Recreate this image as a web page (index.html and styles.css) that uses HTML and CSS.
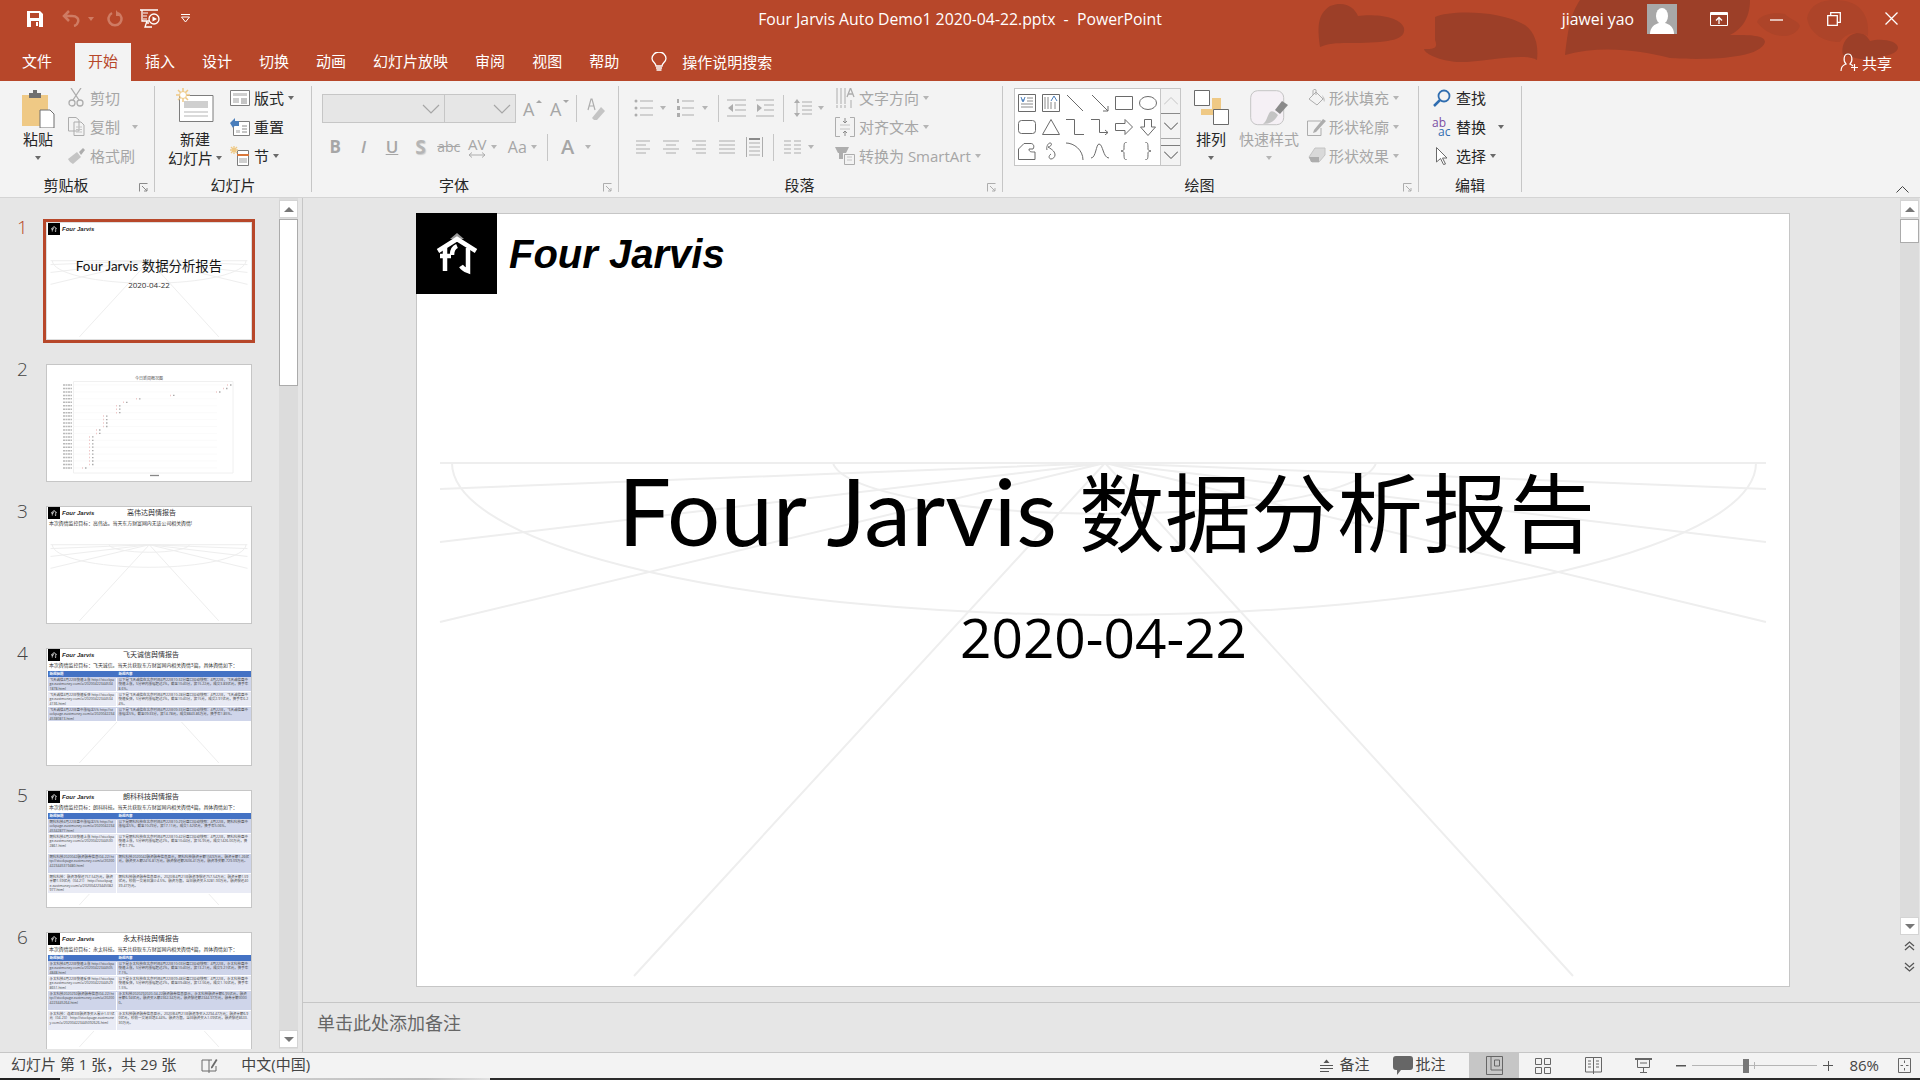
FILE: index.html
```html
<!DOCTYPE html>
<html lang="zh-CN">

<head>
    <meta charset="UTF-8">
    <title>Four Jarvis Auto Demo1 2020-04-22.pptx - PowerPoint</title>
    <link rel="stylesheet" href="styles.css">
</head>

<body>
    <svg class="defs" width="0" height="0">
        <symbol id="rays" viewBox="0 0 1374 773">
            <g class="ray-lines">
                <path d="M24 250H1350"/>
                <path d="M36 250A652 152 0 0 0 1340 250"/>
                <path d="M417 250A272 54 0 0 0 960 250"/>
                <path d="M689 250L24 276M689 250L1350 276M689 250L24 329M689 250L1350 329M689 250L24 409M689 250L1350 409M689 250L218 763M689 250L1157 763"/>
            </g>
        </symbol>
        <symbol id="logo" viewBox="0 0 81 81">
            <rect width="81" height="81" fill="#000"/>
            <path d="M41 20l7 6H34z" fill="#999"/>
            <g fill="none" stroke="#fff" stroke-width="4.5">
                <path d="M22 38L41 26L60 38"/>
                <path d="M29 35V58M24 43H35"/>
                <path d="M52 35V58Q47 56 45 53"/>
                <path d="M36 42Q36 35 41 33"/>
            </g>
        </symbol>
    </svg>

    <header class="head">
        <svg class="head-art" width="660" height="81" viewBox="0 0 660 81">
            <g fill="#9c3f28">
                <path d="M60 47C58 30 56 15 70 6C85 0 95 8 98 16C110 14 140 15 144 28C146 40 130 42 100 43C85 43 70 42 60 47Z"/>
                <path d="M175 17C190 10 240 10 265 25C278 35 278 50 277 60C265 52 225 62 200 62C185 62 165 55 164 49C175 49 178 48 175 40Z"/>
                <path d="M305 55C308 30 310 15 320 0H490C490 20 480 30 470 35C490 35 505 35 505 42C500 60 440 60 410 58C380 50 340 45 305 55Z"/>
                <path d="M583 55C580 42 590 32 600 33C606 34 608 38 610 41C620 38 638 40 638 48C636 56 620 56 610 60C600 60 590 56 583 55Z"/>
            </g>
            <path d="M547 18C550 5 560 0 575 0C600 0 610 15 608 36C595 30 585 34 580 42C565 42 550 35 547 18Z" fill="#ad4429"/>
            <path d="M497 22C500 14 515 12 525 14C530 20 538 20 540 26C535 40 510 40 497 22Z" fill="#ad4429"/>
        </svg>

        <div class="titlebar">
            <div class="qat">
                <svg class="q-save" width="16" height="16" viewBox="0 0 16 16"><path d="M0 0H13L16 3V16H0Z" fill="#fff"/><path d="M3 2H12V7H3Z" fill="#b7472a"/><path d="M4 10H12V16H4Z" fill="#b7472a"/><path d="M9 11H11V15H9Z" fill="#fff"/></svg>
                <svg class="q-undo" width="18" height="17" viewBox="0 0 18 17"><path d="M7 1L2 6L7 11M2 6H10C15 6 17 9 16 12C15.500 14 14 15.500 12 16" fill="none" stroke="#cf7b63" stroke-width="2.500"/></svg>
                <span class="q-caret"></span>
                <svg class="q-redo" width="16" height="17" viewBox="0 0 16 17"><path d="M5 3A6.500 6.500 0 1 0 11 3" fill="none" stroke="#cf7b63" stroke-width="2.500"/><path d="M9 0V6H14Z" fill="#cf7b63"/></svg>
                <svg class="q-show" width="20" height="19" viewBox="0 0 20 19"><path d="M0 1H18M2 1V12H9M7 12L5 18H12M7 14H9" fill="none" stroke="#fff" stroke-width="1.300"/><path d="M3 4H8M3 7H7M3 10H7" stroke="#fff"/><circle cx="14" cy="10" r="5" fill="none" stroke="#fff" stroke-width="1.300"/><path d="M12.500 7.500L17 10L12.500 12.500Z" fill="#fff"/></svg>
                <svg class="q-more" width="9" height="9" viewBox="0 0 9 9"><path d="M0 .5H9M.5 3L4.500 8L8.500 3Z" fill="none" stroke="#fff"/></svg>
            </div>
            <div class="doc-title">Four Jarvis Auto Demo1 2020-04-22.pptx &nbsp;-&nbsp; PowerPoint</div>
            <div class="win">
                <span class="user">jiawei yao</span>
                <svg class="avatar" width="30" height="30" viewBox="0 0 30 30"><rect width="30" height="30" fill="#a8a8a8"/><ellipse cx="15" cy="12" rx="6" ry="8" fill="#fff"/><path d="M3 30C3 23 8 20 12 19H18C22 20 27 23 27 30Z" fill="#fff"/></svg>
                <svg class="w-ribbon" width="18" height="14" viewBox="0 0 18 14"><path d="M.5.500H17.500V13.500H.5Z" fill="none" stroke="#fff"/><path d="M1 1H17V3H1Z" fill="#fff"/><path d="M9 12V6M6 8.500L9 5.500L12 8.500" fill="none" stroke="#fff" stroke-width="1.300"/></svg>
                <svg class="w-min" width="13" height="2" viewBox="0 0 13 2"><path d="M0 1H13" stroke="#fff" stroke-width="1.300"/></svg>
                <svg class="w-max" width="14" height="14" viewBox="0 0 14 14"><path d="M.7 3.700H10.300V13.300H.7ZM3.700 3.500V.7H13.300V10.300H10.500" fill="none" stroke="#fff" stroke-width="1.300"/></svg>
                <svg class="w-close" width="13" height="13" viewBox="0 0 13 13"><path d="M.5.500L12.500 12.500M12.500.500L.5 12.500" stroke="#fff" stroke-width="1.300"/></svg>
            </div>
        </div>

        <nav class="tabs">
            <span class="tab tab-file">文件</span>
            <span class="tab tab-on">开始</span>
            <span class="tab">插入</span>
            <span class="tab">设计</span>
            <span class="tab">切换</span>
            <span class="tab">动画</span>
            <span class="tab">幻灯片放映</span>
            <span class="tab">审阅</span>
            <span class="tab">视图</span>
            <span class="tab">帮助</span>
            <svg class="bulb" width="16" height="20" viewBox="0 0 16 20"><path d="M5 14C5 11 1 10 1 6.500A7 6.500 0 0 1 15 6.500C15 10 11 11 11 14Z" fill="none" stroke="#fff" stroke-width="1.300"/><path d="M5 16H11M5.500 18H10.500" stroke="#fff" stroke-width="1.300"/></svg>
            <span class="tell">操作说明搜索</span>
            <span class="share">
                <svg width="19" height="19" viewBox="0 0 19 19"><path d="M1 18C1 14 3 12 6 11C3 8 3.500 1 8 1C12.500 1 13 8 10 11C11 11.500 12 12 13 13" fill="none" stroke="#fff" stroke-width="1.200"/><path d="M14.500 11V18M11 14.500H18" stroke="#fff" stroke-width="1.200"/></svg>
                共享
            </span>
        </nav>
    </header>

    <section class="ribbon">
        <!-- clipboard -->
        <div class="group g-clip">
            <div class="group-body">
                <div class="big paste">
                    <div class="big-ic">
                        <svg width="34" height="38" viewBox="0 0 34 38"><path d="M1 5H27V36H1Z" fill="#efc985"/><path d="M8 3H20V8H8Z" fill="#6f6f6f"/><path d="M12 0H16V3H12Z" fill="#6f6f6f"/><path d="M19 20H29L33 24V38H19Z" fill="#fff" stroke="#6f6f6f"/></svg>
                    </div>
                    <span>粘贴</span>
                    <i class="caret big-caret"></i>
                </div>
                <div class="rows">
                    <div class="row off"><span class="ic"><svg width="16" height="19" viewBox="0 0 16 19"><path d="M3 0L11 12M13 0L5 12" stroke="#adadad" stroke-width="1.300"/><circle cx="4" cy="15" r="3" fill="none" stroke="#adadad" stroke-width="1.300"/><circle cx="12" cy="15" r="3" fill="none" stroke="#adadad" stroke-width="1.300"/></svg></span>剪切</div>
                    <div class="row off"><span class="ic"><svg width="17" height="19" viewBox="0 0 17 19"><path d="M.5.500H8L11 3V14H.5ZM6 5H13L16 8V18.500H6Z" fill="#f3f3f3" stroke="#adadad"/><path d="M8 10H14M8 12.500H14M8 15H14" stroke="#c4c4c4"/></svg></span>复制<i class="caret copy-caret"></i></div>
                    <div class="row off"><span class="ic"><svg width="18" height="16" viewBox="0 0 18 16"><path d="M1 11L10 4L14 9L6 16C4 15 2 13 1 11Z" fill="#c4c4c4"/><path d="M12 4L16 0L18 2L14 7Z" fill="#adadad"/></svg></span>格式刷</div>
                </div>
            </div>
            <div class="group-label">剪贴板</div>
            <svg class="launcher" width="9" height="9" viewBox="0 0 9 9"><path d="M.5 8.500V.5H8.500M3 3L8 8M5 8H8V5" fill="none" stroke="#8a8a8a"/></svg>
        </div>

        <!-- slides -->
        <div class="group g-slides">
            <div class="group-body">
                <div class="big newslide">
                    <div class="big-ic ic-high">
                        <svg width="38" height="34" viewBox="0 0 38 34"><path d="M3.500 7.500H37V33.500H3.500Z" fill="#fff" stroke="#7d7d7d" stroke-width="1"/><path d="M8 13H32V20H8Z" fill="#cfcfcf"/><path d="M8 24H32M8 28H32" stroke="#b5b5b5"/><path d="M7 0V14M0 7H14M2 2L12 12M12 2L2 12" stroke="#efc985" stroke-width="1.500"/><circle cx="7" cy="7" r="3.500" fill="#fff" stroke="#efc985"/></svg>
                    </div>
                    <span>新建</span>
                    <span class="two">幻灯片<i class="caret"></i></span>
                </div>
                <div class="rows">
                    <div class="row"><span class="ic"><svg width="20" height="16" viewBox="0 0 20 16"><path d="M.5.500H19.500V15.500H.5Z" fill="#fff" stroke="#7d7d7d"/><path d="M3 3H17V6H3ZM3 8H9V13H3Z" fill="#cfcfcf"/><path d="M11 9H17M11 11H17M11 13H17" stroke="#8a8a8a"/></svg></span>版式<i class="caret"></i></div>
                    <div class="row"><span class="ic"><svg width="20" height="18" viewBox="0 0 20 18"><path d="M3.500 3.500H19.500V17.500H3.500Z" fill="#fff" stroke="#7d7d7d"/><path d="M6 12H10V15H6Z" fill="#cfcfcf"/><path d="M12 8H17M12 11H17M12 14H17" stroke="#8a8a8a"/><path d="M0 5L5 0V3H9V8H5C4 8 3 9 3 10Z" fill="#4a7ebb"/></svg></span>重置</div>
                    <div class="row"><span class="ic"><svg width="20" height="20" viewBox="0 0 20 20"><path d="M7.500 4.500H18.500V19.500H7.500Z" fill="#fff" stroke="#7d7d7d"/><path d="M7 9H19" stroke="#d9773a" stroke-width="2"/><path d="M9 12H17V17H9Z" fill="#cfcfcf"/><path d="M4 0V8M0 4H8M1 1L7 7M7 1L1 7" stroke="#efc985" stroke-width="1.300"/></svg></span>节<i class="caret"></i></div>
                </div>
            </div>
            <div class="group-label">幻灯片</div>
        </div>

        <!-- font -->
        <div class="group g-font">
            <div class="group-body block">
                <div class="font-row">
                    <div class="combo combo-name"><svg width="18" height="10" viewBox="0 0 18 10"><path d="M1 1L9 9L17 1" fill="none" stroke="#a6a6a6" stroke-width="1.200"/></svg></div>
                    <div class="combo combo-size"><svg width="18" height="10" viewBox="0 0 18 10"><path d="M1 1L9 9L17 1" fill="none" stroke="#a6a6a6" stroke-width="1.200"/></svg></div>
                    <span class="glyph size-up">A<i class="up"></i></span>
                    <span class="glyph size-down">A<i class="down"></i></span>
                    <i class="vsep sep-a"></i>
                    <svg class="clear-ic" width="18" height="22" viewBox="0 0 18 22"><path d="M5 20L14 9L18 13L10 22H7Z" fill="#c4c4c4"/><path d="M1 12L4 1H5L8 12M2.500 8H6.500" fill="none" stroke="#adadad" stroke-width="1.200"/></svg>
                </div>
                <div class="style-row off">
                    <span class="tool b">B</span>
                    <span class="tool i">I</span>
                    <span class="tool u">U</span>
                    <span class="tool s">S</span>
                    <span class="tool abc">abc</span>
                    <span class="tool av">AV<svg width="18" height="6" viewBox="0 0 18 6"><path d="M1 3H17M4 .5L1 3L4 5.500M14 .5L17 3L14 5.500" fill="none" stroke="#adadad"/></svg></span>
                    <i class="caret"></i>
                    <span class="tool aa">Aa</span>
                    <i class="caret"></i>
                    <i class="vsep sep-b"></i>
                    <span class="tool color">A</span>
                    <i class="caret color-caret"></i>
                </div>
            </div>
            <div class="group-label">字体</div>
            <svg class="launcher" width="9" height="9" viewBox="0 0 9 9"><path d="M.5 8.500V.5H8.500M3 3L8 8M5 8H8V5" fill="none" stroke="#adadad"/></svg>
        </div>

        <!-- paragraph -->
        <div class="group g-para">
            <div class="group-body">
                <div class="para-left">
                    <div class="para-row row-a">
                        <svg width="19" height="20" viewBox="0 0 19 20"><g fill="#adadad"><circle cx="2" cy="3" r="1.500"/><circle cx="2" cy="10" r="1.500"/><circle cx="2" cy="17" r="1.500"/></g><path d="M6 3H19M6 10H19M6 17H19" stroke="#adadad"/></svg>
                        <i class="caret m7"></i>
                        <svg class="m10" width="18" height="20" viewBox="0 0 18 20"><g fill="#adadad"><rect x="1" y="1" width="2" height="4"/><rect x="1" y="8" width="3" height="4"/><rect x="1" y="15" width="3" height="4"/></g><path d="M6 3H18M6 10H18M6 17H18" stroke="#adadad"/></svg>
                        <i class="caret m8"></i>
                        <i class="vsep m10"></i>
                        <svg class="m8" width="19" height="18" viewBox="0 0 19 18"><path d="M0 1H19M8 6H19M8 11H19M0 17H19" stroke="#adadad"/><path d="M6 5L1 9L6 13Z" fill="#adadad"/></svg>
                        <svg class="m10" width="18" height="18" viewBox="0 0 18 18"><path d="M0 1H18M8 6H18M8 11H18M0 17H18" stroke="#adadad"/><path d="M1 5L6 9L1 13Z" fill="#adadad"/></svg>
                        <i class="vsep m9"></i>
                        <svg class="m10" width="18" height="20" viewBox="0 0 18 20"><path d="M8 4H18M8 8H18M8 12H18M8 16H18" stroke="#adadad"/><path d="M3 3V17" stroke="#adadad"/><path d="M0 5L3 1L6 5ZM0 15L3 19L6 15Z" fill="#adadad"/></svg>
                        <i class="caret m6"></i>
                    </div>
                    <div class="para-row row-b">
                        <svg width="14" height="14" viewBox="0 0 14 14"><path d="M0 1H14M0 5H10M0 9H14M0 13H10" stroke="#adadad"/></svg>
                        <svg class="m13" width="16" height="14" viewBox="0 0 16 14"><path d="M0 1H16M3 5H13M0 9H16M3 13H13" stroke="#adadad"/></svg>
                        <svg class="m13" width="14" height="14" viewBox="0 0 14 14"><path d="M0 1H14M4 5H14M0 9H14M4 13H14" stroke="#adadad"/></svg>
                        <svg class="m13" width="16" height="14" viewBox="0 0 16 14"><path d="M0 1H16M0 5H16M0 9H16M0 13H16" stroke="#adadad"/></svg>
                        <svg class="m11" width="17" height="20" viewBox="0 0 17 20"><path d="M.5 0V20M16.500 0V20M3 6H14M3 10H14M3 14H14M3 18H14" stroke="#adadad"/><path d="M3 2H14" stroke="#8a8a8a" stroke-width="2"/></svg>
                        <i class="vsep m10"></i>
                        <svg class="m10" width="17" height="14" viewBox="0 0 17 14"><path d="M0 1H7M0 5H7M0 9H7M0 13H7M10 1H17M10 5H17M10 9H17M10 13H17" stroke="#adadad"/></svg>
                        <i class="caret m7"></i>
                    </div>
                </div>
                <div class="rows">
                    <div class="row off"><span class="ic"><svg width="19" height="20" viewBox="0 0 19 20"><path d="M1 0V20M5 0V20M9 0V20" stroke="#adadad" stroke-dasharray="16 1"/><path d="M11 9L14.500 0L18 9M12.500 6H16.500" fill="none" stroke="#adadad" stroke-width="1.300"/><path d="M15 12V20" stroke="#adadad"/></svg></span>文字方向<i class="caret"></i></div>
                    <div class="row off"><span class="ic"><svg width="20" height="20" viewBox="0 0 20 20"><path d="M5 .5H.5V19.500H5M15 .5H19.500V19.500H15" fill="none" stroke="#adadad"/><path d="M5 8H15M5 12H15" stroke="#c4c4c4"/><path d="M10 1V6M8 4L10 6L12 4M10 19V14M8 16L10 14L12 16" fill="none" stroke="#8a8a8a"/></svg></span>对齐文本<i class="caret"></i></div>
                    <div class="row off"><span class="ic"><svg width="20" height="18" viewBox="0 0 20 18"><path d="M0 0H14L11 6H8V12H4V6H3Z" fill="#adadad"/><path d="M9.500 7.500H19.500V17.500H9.500Z" fill="#f3f3f3" stroke="#adadad"/><path d="M12 10H17M12 13H17" stroke="#c4c4c4"/></svg></span>转换为 SmartArt<i class="caret"></i></div>
                </div>
            </div>
            <svg class="launcher" width="9" height="9" viewBox="0 0 9 9"><path d="M.5 8.500V.5H8.500M3 3L8 8M5 8H8V5" fill="none" stroke="#adadad"/></svg>
            <div class="group-label">段落</div>
        </div>

        <!-- drawing -->
        <div class="group g-draw">
            <div class="group-body">
                <div class="gallery">
                    <div class="shapes">
                        <svg width="18" height="18" viewBox="0 0 18 18"><path d="M.5.500H17.500V17.500H.5Z" fill="#fff" stroke="#6a6a6a"/><path d="M3 3L5 8L7 3M3.500 6H6.500" fill="none" stroke="#4a7ebb"/><path d="M9 4H15M9 7H15M3 10H15M3 13H15" stroke="#8a8a8a"/></svg>
                        <svg width="18" height="18" viewBox="0 0 18 18"><path d="M.5.500H17.500V17.500H.5Z" fill="#fff" stroke="#6a6a6a"/><path d="M3 3V15M6 3V15M9 8V15M13 8V15" stroke="#8a8a8a"/><path d="M9 7L12 2L15 7" fill="none" stroke="#4a7ebb"/></svg>
                        <svg width="18" height="18" viewBox="0 0 18 18"><path d="M1 1L17 17" stroke="#6a6a6a"/></svg>
                        <svg width="18" height="18" viewBox="0 0 18 18"><path d="M1 1L17 17M12 17H17V12" fill="none" stroke="#6a6a6a"/></svg>
                        <svg width="18" height="14" viewBox="0 0 18 14"><path d="M.5.500H17.500V13.500H.5Z" fill="none" stroke="#6a6a6a"/></svg>
                        <svg width="18" height="14" viewBox="0 0 18 14"><ellipse cx="9" cy="7" rx="8.500" ry="6.500" fill="none" stroke="#6a6a6a"/></svg>
                        <svg width="18" height="14" viewBox="0 0 18 14"><rect x=".5" y=".5" width="17" height="13" rx="3" fill="none" stroke="#6a6a6a"/></svg>
                        <svg width="18" height="16" viewBox="0 0 18 16"><path d="M9 .5L17.500 15.500H.5Z" fill="none" stroke="#6a6a6a"/></svg>
                        <svg width="18" height="16" viewBox="0 0 18 16"><path d="M0 .5H8.500V15.500H18" fill="none" stroke="#6a6a6a"/></svg>
                        <svg width="18" height="16" viewBox="0 0 18 16"><path d="M0 .5H8.500V13.500H17M14 11L17 13.500L14 16" fill="none" stroke="#6a6a6a"/></svg>
                        <svg width="18" height="16" viewBox="0 0 18 16"><path d="M.5 4.500H10V.5L17.500 8L10 15.500V11.500H.5Z" fill="none" stroke="#6a6a6a"/></svg>
                        <svg width="16" height="17" viewBox="0 0 16 17"><path d="M4.500.5H11.500V8H15.500L8 16.500L.5 8H4.500Z" fill="none" stroke="#6a6a6a"/></svg>
                        <svg width="18" height="17" viewBox="0 0 18 17"><path d="M.5 16.500V6L6 .5H13C15 .5 17 3 15 6H11C11 9 13 9 17 9V16.500Z" fill="none" stroke="#6a6a6a"/></svg>
                        <svg width="12" height="18" viewBox="0 0 12 18"><path d="M2 8C1 5 3 1 5 1C8 1 6 5 3 5C8 8 10 10 10 13C10 15 8 17 6 17C4 17 3 14 6 12" fill="none" stroke="#6a6a6a"/></svg>
                        <svg width="18" height="18" viewBox="0 0 18 18"><path d="M0 1C8 1 17 8 17 18" fill="none" stroke="#6a6a6a"/></svg>
                        <svg width="18" height="16" viewBox="0 0 18 16"><path d="M0 15C5 15 5 1 8 1C12 1 12 15 18 15" fill="none" stroke="#6a6a6a"/></svg>
                        <svg width="8" height="18" viewBox="0 0 8 18"><path d="M7 0C4 0 4 2 4 7C4 8 3 9 1 9C3 9 4 10 4 11C4 16 4 18 7 18" fill="none" stroke="#6a6a6a"/></svg>
                        <svg width="8" height="18" viewBox="0 0 8 18"><path d="M1 0C4 0 4 2 4 7C4 8 5 9 7 9C5 9 4 10 4 11C4 16 4 18 1 18" fill="none" stroke="#6a6a6a"/></svg>
                    </div>
                    <div class="gallery-btns">
                        <span class="gbtn gbtn-off"><svg width="14" height="8" viewBox="0 0 14 8"><path d="M0 7.500L7 .5L14 7.500" fill="none" stroke="#c4c4c4"/></svg></span>
                        <span class="gbtn"><svg width="14" height="8" viewBox="0 0 14 8"><path d="M0 .5L7 7.500L14 .5" fill="none" stroke="#444"/></svg></span>
                        <span class="gbtn gbtn-more"><i></i><svg width="14" height="8" viewBox="0 0 14 8"><path d="M0 .5L7 7.500L14 .5" fill="none" stroke="#444"/></svg></span>
                    </div>
                </div>
                <div class="big arrange">
                    <div class="big-ic">
                        <svg width="35" height="35" viewBox="0 0 35 35"><path d="M18 8H27V25H7V19H18Z" fill="#efc985"/><path d="M.5.5H15.500V15.500H.5ZM19.500 19.500H34.500V34.500H19.500Z" fill="#fff" stroke="#6a6a6a"/></svg>
                    </div>
                    <span>排列</span>
                    <i class="caret big-caret"></i>
                </div>
                <div class="big quick off">
                    <div class="big-ic">
                        <svg width="38" height="36" viewBox="0 0 38 36"><rect x=".7" y=".7" width="33" height="34" rx="7" fill="#f5f0f5" stroke="#c4c4c4"/><path d="M25 20L32 11L38 15L30 24Z" fill="#8a8a8a"/><path d="M20 22C22 20 25 22 28 25C25 31 20 34 13 34C17 31 17 26 20 22Z" fill="#c4c4c4"/></svg>
                    </div>
                    <span>快速样式</span>
                    <i class="caret big-caret"></i>
                </div>
                <div class="rows rows-shape">
                    <div class="row off"><span class="ic"><svg width="18" height="18" viewBox="0 0 18 18"><path d="M1 10L8 3L15 10L9 16Z" fill="#f3f3f3" stroke="#adadad"/><path d="M8 6V1C8 0 5 0 5 2V6" fill="none" stroke="#adadad"/><path d="M14 6C16 8 18 11 16 13Z" fill="#c4c4c4"/></svg></span>形状填充<i class="caret"></i></div>
                    <div class="row off"><span class="ic"><svg width="20" height="18" viewBox="0 0 20 18"><path d="M14 3H.5V17.500H14V10" fill="none" stroke="#adadad"/><path d="M7 12L16 1L19 3L9 14L6 15Z" fill="#adadad"/></svg></span>形状轮廓<i class="caret"></i></div>
                    <div class="row off"><span class="ic"><svg width="18" height="17" viewBox="0 0 18 17"><path d="M1 10L7 1H17V8L11 15H4Z" fill="#d9d9d9" stroke="#c4c4c4"/><path d="M1 10H11V15H3Z" fill="#adadad"/></svg></span>形状效果<i class="caret"></i></div>
                </div>
            </div>
            <div class="group-label">绘图</div>
            <svg class="launcher" width="9" height="9" viewBox="0 0 9 9"><path d="M.5 8.500V.5H8.500M3 3L8 8M5 8H8V5" fill="none" stroke="#adadad"/></svg>
        </div>

        <!-- editing -->
        <div class="group g-edit">
            <div class="group-body">
                <div class="rows">
                    <div class="row"><span class="ic"><svg width="18" height="18" viewBox="0 0 18 18"><circle cx="11" cy="7" r="5.500" fill="none" stroke="#2f6db0" stroke-width="1.800"/><path d="M7 11L1 17" stroke="#2f6db0" stroke-width="2.500"/></svg></span>查找</div>
                    <div class="row"><span class="ic ab"><b>ab</b><b>ac</b></span>替换<i class="caret replace-caret"></i></div>
                    <div class="row"><span class="ic"><svg width="12" height="18" viewBox="0 0 12 18"><path d="M.5.500L11 11H6.500L9.500 17L7.500 17.500L4.500 11.500L.5 15Z" fill="#fff" stroke="#6a6a6a"/></svg></span>选择<i class="caret"></i></div>
                </div>
            </div>
            <div class="group-label">编辑</div>
        </div>

        <svg class="collapse" width="13" height="7" viewBox="0 0 13 7"><path d="M.5 6.500L6.500.5L12.500 6.500" fill="none" stroke="#444"/></svg>
    </section>

    <main class="workspace">
        <aside class="thumbs">
            <div class="thumb-list">
                <div class="thumb-item">
                    <span class="num num-on">1</span>
                    <div class="thumb thumb-on">
                        <svg class="thumb-rays"><use href="#rays"/></svg>
                        <div class="t-head"><svg width="12" height="12"><use href="#logo"/></svg><b>Four Jarvis</b></div>
                        <div class="t-title">Four Jarvis 数据分析报告</div>
                        <div class="t-date">2020-04-22</div>
                    </div>
                </div>
                <div class="thumb-item">
                    <span class="num">2</span>
                    <div class="thumb">
                        <div class="chart-title">今日新闻概况图</div>
                        <svg class="chart" width="205" height="117" viewBox="0 0 205 117">
                            <path d="M26.500 16.500H186V108H26.500Z" fill="none" stroke="#f0f0f0"/>
                            <path d="M26 20H180M26 27H170M26 33.800H170M26 40.800H170M26 47.700H170M26 54.600H170M26 61.500H170M26 68.400H170M26 75.300H170M26 82.200H170M26 89.100H170M26 96H170M26 103H170" stroke="#f7f7f7" stroke-width=".6"/>
                            <path d="M16 20h9M16 23.500h9M16 27h9M16 30.400h9M16 33.800h9M16 37.300h9M16 40.800h9M16 44.200h9M16 47.700h9M16 51.100h9M16 54.600h9M16 58h9M16 61.500h9M16 65h9M16 68.400h9M16 71.900h9M16 75.300h9M16 78.800h9M16 82.200h9M16 85.700h9M16 89.100h9M16 92.600h9M16 96h9M16 99.500h9M16 103h9" stroke="#b9b9b9" stroke-width="1.500" stroke-dasharray="2 .5"/>
                            <path d="M180 20h1M176 23.500h1M169 27h1M123 30.400h1M89 33.800h1M76 37.300h1M69 40.800h1M69 44.200h1M69 47.700h1M56 51.100h1M56 54.600h1M56 58h1M56 61.500h1M49 65h1M49 68.400h1M42 71.900h1M42 75.300h1M42 78.800h1M42 82.200h1M42 85.700h1M42 89.100h1M42 92.600h1M42 96h1M42 99.500h1M35 103h1" stroke="#f0c8c8" stroke-width="1.500"/>
                            <path d="M183 20h1.500M179 23.500h1.500M172 27h1.500M126 30.400h1.500M92 33.800h1.500M79 37.300h1.500M72 40.800h1.500M72 44.200h1.500M72 47.700h1.500M59 51.100h1.500M59 54.600h1.500M59 58h1.500M59 61.500h1.500M52 65h1.500M52 68.400h1.500M45 71.900h1.500M45 75.300h1.500M45 78.800h1.500M45 82.200h1.500M45 85.700h1.500M45 89.100h1.500M45 92.600h1.500M45 96h1.500M45 99.500h1.500M38 103h1.500" stroke="#aaa" stroke-width="1.300"/>
                            <path d="M103 110.500h9" stroke="#888" stroke-width="1.300"/>
                        </svg>
                    </div>
                </div>
                <div class="thumb-item">
                    <span class="num">3</span>
                    <div class="thumb">
                        <svg class="thumb-rays"><use href="#rays"/></svg>
                        <div class="t-head"><svg width="12" height="12"><use href="#logo"/></svg><b>Four Jarvis</b><span class="t-name name-3">高伟达舆情报告</span></div>
                        <div class="t-line">本次舆情监控目标：高伟达。当天东方财富网内无该公司相关舆情!</div>
                    </div>
                </div>
                <div class="thumb-item">
                    <span class="num">4</span>
                    <div class="thumb">
                        <svg class="thumb-rays"><use href="#rays"/></svg>
                        <div class="t-head"><svg width="12" height="12"><use href="#logo"/></svg><b>Four Jarvis</b><span class="t-name">飞天诚信舆情报告</span></div>
                        <div class="t-line">本次舆情监控目标：飞天诚信。当天共获取东方财富网内相关舆情3篇，具体舆情如下：</div>
                        <div class="t-table">
                            <div class="t-hd"><span>新闻标题</span><span>新闻内容</span></div>
                            <div class="t-tr"><span>飞天诚信4月22日快速上涨 http://stockpage.eastmoney.com/a/202004223445341878.html</span><span>以下是飞天诚信在北京时间4月22日10:32分盘口异动快照：4月22日，飞天诚信盘中快速上涨，5分钟内涨幅超过2%，截至10:40分，报15.22元，成交3.83亿元，换手率8.6%。</span></div>
                            <div class="t-tr"><span>飞天诚信4月22日快速反弹 http://stockpage.eastmoney.com/a/202004223445344136.html</span><span>以下是飞天诚信在北京时间4月22日10:28分盘口异动快照：4月22日，飞天诚信盘中快速反弹，5分钟内涨幅超过2%，截至10:40分，报15元，成交2.91亿元，换手率6.24%。</span></div>
                            <div class="t-tr"><span>飞天诚信4月22日盘中涨幅达5% http://stockpage.eastmoney.com/a/202004223445380813.html</span><span>以下是飞天诚信在北京时间4月22日09:33分盘口异动快照：4月22日，飞天诚信盘中涨幅达5%，截至09:33分，报14.78元，成交8843.86万元，换手率1.85%。</span></div>
                        </div>
                    </div>
                </div>
                <div class="thumb-item">
                    <span class="num">5</span>
                    <div class="thumb">
                        <svg class="thumb-rays"><use href="#rays"/></svg>
                        <div class="t-head"><svg width="12" height="12"><use href="#logo"/></svg><b>Four Jarvis</b><span class="t-name">朗科科技舆情报告</span></div>
                        <div class="t-line">本次舆情监控目标：朗科科技。当天共获取东方财富网内相关舆情4篇，具体舆情如下：</div>
                        <div class="t-table tall-5">
                            <div class="t-hd"><span>新闻标题</span><span>新闻内容</span></div>
                            <div class="t-tr"><span>朗科科技4月22日盘中涨幅达5% http://stockpage.eastmoney.com/a/202004223445342877.html</span><span>以下是朗科科技在北京时间4月22日10:29分盘口异动快照：4月22日，朗科科技盘中涨幅达5%，截至10:29分，报17.11元，成交1.62亿元，换手率5.06%。</span></div>
                            <div class="t-tr"><span>朗科科技4月22日快速上涨 http://stockpage.eastmoney.com/a/202004223445302861.html</span><span>以下是朗科科技在北京时间4月22日10:42分盘口异动快照：4月22日，朗科科技盘中快速上涨，5分钟内涨幅超过2%，截至10:44分，报16.95元，成交1426.00万元，换手率1.7%。</span></div>
                            <div class="t-tr"><span>朗科科技2020042融资融券信息(04-22) http://stockpage.eastmoney.com/a/202004223445319480.html</span><span>朗科科技2020042融资融券信息显示，朗科科技融资余额1569万元，融资余额1.26亿元，融资买入额2416.81万元，融资偿还额2606.41万元，融资净买额-729.09万元。</span></div>
                            <div class="t-tr"><span>朗科科技：融资净偿还757.54万元，融资余额1.59亿元（04-21） http://stockpage.eastmoney.com/a/202004223445082977.html</span><span>朗科科技融资融券信息显示，2020年4月21日融资净偿还757.54万元；融资余额1.59亿元，较前一交易日减少4.5%。融资方面，当日融资买入3281.93万元，融资偿还4039.47万元。</span></div>
                        </div>
                    </div>
                </div>
                <div class="thumb-item">
                    <span class="num">6</span>
                    <div class="thumb">
                        <svg class="thumb-rays"><use href="#rays"/></svg>
                        <div class="t-head"><svg width="12" height="12"><use href="#logo"/></svg><b>Four Jarvis</b><span class="t-name">永太科技舆情报告</span></div>
                        <div class="t-line">本次舆情监控目标：永太科技。当天共获取东方财富网内相关舆情4篇，具体舆情如下：</div>
                        <div class="t-table tall-6">
                            <div class="t-hd"><span>新闻标题</span><span>新闻内容</span></div>
                            <div class="t-tr"><span>永太科技4月22日快速上涨 http://stockpage.eastmoney.com/a/202004223445054848.html</span><span>以下是永太科技在北京时间4月22日10:03分盘口异动快照：4月22日，永太科技盘中快速上涨，5分钟内涨幅超过2%，截至10:40分，报13.21元，成交9.21亿元，换手率7.1%。</span></div>
                            <div class="t-tr"><span>永太科技4月22日快速反弹 http://stockpage.eastmoney.com/a/202004223445298651.html</span><span>以下是永太科技在北京时间4月22日09:48分盘口异动快照：4月22日，永太科技盘中快速反弹，5分钟内涨幅超过2%，截至09:48分，报12.56元，成交1.16亿元，换手率1.5%。</span></div>
                            <div class="t-tr"><span>永太科技2020292融资融券信息(04-22) http://stockpage.eastmoney.com/a/202004223445264.html</span><span>永太科技2020292020-04-22融资融券信息显示，永太科技融资余额6.95亿元，融资余额6.94亿元，融资买入额2362.34万元，融资偿还额2344.97万元，融券余额30000。</span></div>
                            <div class="t-tr"><span>永太科技：连续3日融资净买入累计1.01亿元（04-23） http://stockpage.eastmoney.com/a/202004223445092626.html</span><span>永太科技融资融券信息显示，2020年4月21日融资净买入2294.47万元；融资余额6.90亿元，较前一交易日增4.44%。融资方面，当日融资买入1.09亿元，融资偿还8633.30万元。</span></div>
                        </div>
                    </div>
                </div>
            </div>
            <div class="thumb-scroll">
                <span class="sb-btn"><i class="tri-up"></i></span>
                <span class="sb-thumb sb-thumb-long"></span>
                <span class="sb-fill"></span>
                <span class="sb-btn"><i class="tri-down"></i></span>
            </div>
        </aside>

        <div class="editor">
            <div class="stage">
                <div class="slide-wrap">
                    <article class="slide">
                        <svg class="slide-rays"><use href="#rays"/></svg>
                        <div class="slide-head">
                            <svg width="81" height="81"><use href="#logo"/></svg>
                            <span class="brand">Four Jarvis</span>
                        </div>
                        <h1 class="slide-title"><span class="lat">Four Jarvis</span> 数据分析报告</h1>
                        <p class="slide-date">2020-04-22</p>
                    </article>
                </div>
                <div class="main-scroll">
                    <div class="main-track">
                        <span class="sb-btn"><i class="tri-up"></i></span>
                        <span class="sb-thumb sb-thumb-short"></span>
                        <span class="sb-fill"></span>
                        <span class="sb-btn"><i class="tri-down"></i></span>
                    </div>
                    <svg class="dbl dbl-up" width="11" height="10" viewBox="0 0 11 10"><path d="M1 5L5.500 1L10 5M1 9L5.500 5L10 9" fill="none" stroke="#555" stroke-width="1.300"/></svg>
                    <svg class="dbl dbl-down" width="11" height="10" viewBox="0 0 11 10"><path d="M1 1L5.500 5L10 1M1 5L5.500 9L10 5" fill="none" stroke="#555" stroke-width="1.300"/></svg>
                </div>
            </div>
            <div class="notes">单击此处添加备注</div>
        </div>
    </main>

    <footer class="status">
        <span class="st-text st-count">幻灯片 第 1 张，共 29 张</span>
        <svg class="st-spell" width="17" height="17" viewBox="0 0 17 17"><path d="M8 3H1V14H8M8 3V16M8 3H11M8 14H15V9" fill="none" stroke="#6a6a6a"/><path d="M10 10L15 2L16.500 3L11.500 11L10 11.500Z" fill="#6a6a6a"/></svg>
        <span class="st-text st-lang">中文(中国)</span>
        <span class="st-right">
            <svg class="st-notes-ic" width="13" height="14" viewBox="0 0 13 14"><path d="M3.500 4L6.500 .5L9.500 4Z" fill="#555"/><path d="M0 6.500H13M0 9.500H13M0 12.500H9" stroke="#555"/></svg>
            <span class="st-text st-btn">备注</span>
            <svg class="st-comment-ic" width="20" height="19" viewBox="0 0 20 19"><path d="M3 0H17C19 0 20 1 20 3V11C20 13 19 14 17 14H8L4 19V14H3C1 14 0 13 0 11V3C0 1 1 0 3 0Z" fill="#666"/></svg>
            <span class="st-text st-btn st-tight">批注</span>
            <span class="view-on"><svg width="17" height="19" viewBox="0 0 17 19"><path d="M.5.5H16.500V18.500H.5ZM5 .5V14H16.500M8.500 4H13.500V10H8.500Z" fill="none" stroke="#666"/></svg></span>
            <svg class="view-ic v-grid" width="16" height="16" viewBox="0 0 16 16"><path d="M.5.5H6.500V6.500H.5ZM9.500.5H15.500V6.500H9.500ZM.5 9.500H6.500V15.500H.5ZM9.500 9.500H15.500V15.500H9.500Z" fill="none" stroke="#666"/></svg>
            <svg class="view-ic v-read" width="17" height="17" viewBox="0 0 17 17"><path d="M.5.5H16.500V15H.5ZM8.500 .5V17M3 4H6M3 7H6M3 10H6M11 4H14M11 7H14M11 10H14" fill="none" stroke="#666"/></svg>
            <svg class="view-ic v-show" width="17" height="15" viewBox="0 0 17 15"><path d="M0 1H17" stroke="#666" stroke-width="2"/><path d="M2.500 1V9.500H14.500V1M8.500 9.500V14.500M5 14.500H12M5 5H12" fill="none" stroke="#666"/></svg>
            <span class="zoom-minus"></span>
            <span class="zoom-track"><i class="zoom-tick"></i><i class="zoom-knob"></i></span>
            <span class="zoom-plus"></span>
            <span class="zoom-val">86%</span>
            <svg class="st-fit" width="13" height="15" viewBox="0 0 13 15"><path d="M.5.5H12.500V14.500H.5Z" fill="none" stroke="#666"/><path d="M6.500 2.500V5M6.500 10V12.500M2.500 7.500H5M8 7.500H10.500" stroke="#666"/></svg>
        </span>
    </footer>
    <div class="taskbar-edge"><span class="edge-a"></span><span class="edge-b"></span><span class="edge-c"></span></div>
</body>

</html>
```

FILE: styles.css
```css
/* Page */
* {
    box-sizing: border-box;
}

html,
body {
    margin: 0;
    height: 1080px;
    overflow: hidden;
}

body {
    font-family: "Open Sans", "Noto Sans CJK SC", sans-serif;
    font-size: 15px;
    color: #262626;
    background: #e6e6e6;
}

svg {
    display: block;
    flex: none;
}

i {
    font-style: normal;
}

.defs {
    position: absolute;
}

.ray-lines path {
    fill: none;
    stroke: #eeeeee;
    stroke-width: var(--ray, 2.5px);
    vector-effect: non-scaling-stroke;
}

/* Title bar and tabs */
.head {
    position: relative;
    height: 81px;
    background: #b7472a;
    color: #fff;
}

.head-art {
    position: absolute;
    top: 0;
    right: 0;
}

.titlebar {
    position: relative;
    height: 43px;
    display: grid;
    grid-template-columns: 1fr auto 1fr;
    align-items: center;
}

.qat {
    display: flex;
    align-items: center;
    padding: 0 0 6px 27px;
}

.q-undo {
    margin-left: 19px;
}

.q-caret {
    width: 0;
    height: 0;
    margin-left: 8px;
    border: 3px solid transparent;
    border-top: 4px solid #cf7b63;
    border-bottom: 0;
}

.q-redo {
    margin-left: 13px;
}

.q-show {
    margin-left: 17px;
}

.q-more {
    margin-left: 21px;
}

.doc-title {
    padding-bottom: 5px;
    font-size: 15.800px;
    white-space: nowrap;
}

.win {
    display: flex;
    align-items: center;
    justify-content: flex-end;
    padding-bottom: 6px;
}

.user {
    font-size: 15.800px;
}

.avatar {
    margin-left: 13px;
}

.w-ribbon {
    margin-left: 33px;
}

.w-min {
    margin: 3px 0 0 42px;
}

.w-max {
    margin-left: 44px;
}

.w-close {
    margin: 0 22px 0 44px;
}

.tabs {
    position: relative;
    height: 38px;
    display: flex;
    align-items: center;
    gap: 1px;
    padding-left: 9px;
}

.tab {
    height: 38px;
    line-height: 36px;
    padding: 0 13px;
    white-space: nowrap;
}

.tab-file {
    margin-right: 9px;
}

.tab-on {
    color: #b7472a;
    background: #f3f3f3;
}

.bulb {
    margin-left: 18px;
}

.tell {
    margin: 0 0 2px 14px;
}

.share {
    display: flex;
    align-items: center;
    gap: 3px;
    margin-left: auto;
    padding-right: 28px;
}

/* Ribbon */
.ribbon {
    position: relative;
    height: 117px;
    display: flex;
    align-items: flex-start;
    background: #f3f3f3;
    border-bottom: 1px solid #d4d4d4;
}

.group {
    position: relative;
    height: 106px;
    margin-top: 5px;
    border-right: 1px solid #c6c6c6;
}

.g-clip {
    width: 155px;
}

.g-slides {
    width: 157px;
}

.g-font {
    width: 307px;
}

.g-para {
    width: 384px;
}

.g-draw {
    width: 416px;
}

.g-edit {
    width: 103px;
}

.group-body {
    height: 90px;
    display: flex;
    align-items: flex-start;
}

.group-body.block {
    display: flow-root;
}

.group-label {
    height: 18px;
    line-height: 18px;
    padding-right: 22px;
    text-align: center;
    white-space: nowrap;
}

.g-slides .group-label,
.g-edit .group-label {
    padding-right: 0;
}

.launcher {
    position: absolute;
    right: 6px;
    top: 97px;
}

.off {
    color: #a6a6a6;
}

.caret {
    display: inline-block;
    flex: none;
    width: 0;
    height: 0;
    border: 3.5px solid transparent;
    border-top: 4px solid #6a6a6a;
    border-bottom: 0;
}

.off .caret,
.style-row .caret,
.para-row .caret {
    border-top-color: #b5b5b5;
}

/* big buttons: icon, label, caret */
.big {
    display: flex;
    flex-direction: column;
    align-items: center;
    line-height: 16px;
    white-space: nowrap;
}

.big-ic {
    height: 45px;
    padding-top: 4px;
}

.ic-high {
    padding-top: 2px;
}

.big-caret {
    margin-top: 9px;
}

.two {
    display: flex;
    align-items: center;
    gap: 3px;
    margin-top: 3px;
}

.paste {
    width: 36px;
    margin-left: 20px;
}

.newslide {
    width: 60px;
    margin-left: 10px;
}

.arrange {
    width: 48px;
    margin-left: 6px;
}

.quick {
    width: 64px;
    margin-left: 2px;
}

/* three-line button stacks */
.rows {
    margin-top: -3px;
    margin-left: 11px;
}

.row {
    height: 29px;
    display: flex;
    align-items: center;
    white-space: nowrap;
}

.row .caret {
    margin-left: 4px;
}

.ic {
    width: 20px;
    margin-right: 4px;
    display: flex;
    justify-content: center;
}

.g-clip .ic {
    width: 18px;
    margin-right: 5px;
}

.copy-caret {
    margin-left: 12px !important;
}

.g-slides .rows {
    margin-left: 5px;
}

.g-para .rows {
    margin-left: 0;
}

.rows-shape {
    margin-left: 6px;
}

.rows-shape .ic {
    margin-right: 2px;
}

.g-edit .rows {
    margin-left: 13px;
}

.replace-caret {
    margin-left: 12px !important;
}

.ab {
    flex-direction: column;
    font-size: 12px;
    line-height: 9px;
}

.ab b {
    font-weight: 400;
    color: #7b4ea3;
}

.ab b + b {
    margin-left: 6px;
    color: #2f6db0;
}

/* font group */
.font-row {
    display: flex;
    align-items: center;
    height: 29px;
    margin: 8px 0 0 10px;
}

.combo {
    height: 29px;
    display: flex;
    align-items: center;
    justify-content: flex-end;
    padding-right: 4px;
    background: #e6e6e6;
    border: 1px solid #c6c6c6;
}

.combo-name {
    width: 123px;
}

.combo-size {
    width: 72px;
    margin-left: -1px;
}

.glyph {
    position: relative;
    width: 14px;
    font-size: 18px;
    line-height: 20px;
    color: #a6a6a6;
}

.glyph i {
    position: absolute;
    right: -5px;
    top: 1px;
    width: 0;
    height: 0;
    border: 3px solid transparent;
}

.glyph .up {
    border-top: 0;
    border-bottom: 3px solid #a6a6a6;
}

.glyph .down {
    border-bottom: 0;
    border-top: 3px solid #a6a6a6;
}

.size-up {
    margin-left: 7px;
}

.size-down {
    margin-left: 13px;
}

.vsep {
    flex: none;
    display: block;
    width: 1px;
    height: 27px;
    background: #c6c6c6;
}

.sep-a {
    margin-left: 12px;
}

.clear-ic {
    margin-left: 10px;
}

.style-row {
    display: flex;
    align-items: center;
    height: 28px;
    margin: 10px 0 0 9px;
    font-family: "Open Sans", sans-serif;
}

.tool {
    width: 28.4px;
    text-align: center;
    font-size: 17px;
    line-height: 20px;
}

.tool.b {
    font-weight: 700;
}

.tool.i {
    font-style: italic;
    font-weight: 600;
}

.tool.u {
    text-decoration: underline;
    font-weight: 600;
}

.tool.s {
    font-weight: 700;
    font-size: 19px;
    color: #b5b5b5;
    text-shadow: 1px 1px 1px #ccc;
}

.tool.abc {
    text-decoration: line-through;
    font-size: 14px;
}

.tool.av {
    display: flex;
    flex-direction: column;
    align-items: center;
    font-size: 15px;
    line-height: 15px;
}

.tool.aa {
    margin-left: 6px;
    width: 28px;
    font-size: 16px;
}

.sep-b {
    margin-left: 10px;
}

.tool.color {
    font-size: 20px;
    font-weight: 600;
    margin-left: 5px;
}

.color-caret {
    margin-left: 3px;
}

/* paragraph group */
.para-left {
    width: 216px;
}

.para-row {
    display: flex;
    align-items: center;
    height: 30px;
}

.row-a {
    margin: 7px 0 0 15px;
}

.row-b {
    margin: 9px 0 0 17px;
}

.m6 {
    margin-left: 6px;
}

.m7 {
    margin-left: 7px;
}

.m8 {
    margin-left: 8px;
}

.m9 {
    margin-left: 9px;
}

.m10 {
    margin-left: 10px;
}

.m11 {
    margin-left: 11px;
}

.m13 {
    margin-left: 13px;
}

/* drawing group */
.gallery {
    display: flex;
    height: 78px;
    margin: 2px 0 0 11px;
    background: #fff;
    border: 1px solid #c6c6c6;
}

.shapes {
    width: 145px;
    display: grid;
    grid-template-columns: repeat(6, 24.2px);
    grid-auto-rows: 24px;
    place-items: center;
    padding-top: 2px;
}

.gallery-btns {
    width: 20px;
    display: flex;
    flex-direction: column;
    background: #f3f3f3;
    border-left: 1px solid #c6c6c6;
}

.gbtn {
    height: 25px;
    display: flex;
    flex-direction: column;
    align-items: center;
    justify-content: center;
    border-bottom: 1px solid #a6a6a6;
}

.gbtn-off {
    border-bottom-color: #8a8a8a;
}

.gbtn-more {
    flex: 1;
    gap: 5px;
    border-bottom: 0;
}

.gbtn-more i {
    width: 100%;
    height: 1px;
    background: #7d7d7d;
}

.collapse {
    position: absolute;
    right: 11px;
    bottom: 4px;
}

/* Workspace */
.workspace {
    height: 854px;
    display: flex;
}

.thumbs {
    width: 303px;
    display: flex;
    border-right: 1px solid #c6c6c6;
    padding-right: 4px;
}

.thumb-list {
    width: 279px;
    height: 851px;
    padding-top: 24px;
    overflow: hidden;
}

.thumb-item {
    height: 142px;
    display: flex;
    align-items: flex-start;
}

.num {
    width: 46px;
    padding-left: 17px;
    font-size: 19px;
    font-weight: 300;
    line-height: 24px;
    color: #444;
    margin-top: -7px;
}

.num-on {
    color: #b7472a;
}

.thumb {
    --ray: 1px;
    position: relative;
    width: 206px;
    height: 118px;
    background: #fff;
    border: 1px solid #c6c6c6;
    overflow: hidden;
}

.thumb-on {
    overflow: visible;
    border-color: #ddd;
    box-shadow: 0 0 0 3px #b7472a;
}

.thumb-rays {
    position: absolute;
    left: 0;
    top: 0;
    width: 100%;
    height: 100%;
}

.t-head {
    position: relative;
    display: flex;
    align-items: center;
    height: 12px;
    margin: 0 0 0 1px;
}

.t-head b {
    margin-left: 2px;
    font: italic 700 6px "Liberation Sans", sans-serif;
}

.t-name {
    position: absolute;
    left: 75px;
    font-size: 7px;
    line-height: 10px;
    color: #333;
}

.name-3 {
    left: 79px;
}

.t-line {
    position: relative;
    padding: 0 0 0 2px;
    font-size: 4.900px;
    line-height: 9px;
    color: #333;
    white-space: nowrap;
}

.t-title {
    position: relative;
    margin-top: 21px;
    text-align: center;
    font-family: Lato, "Noto Sans CJK SC", sans-serif;
    font-size: 13.400px;
    line-height: 20px;
    color: #111;
}

.t-date {
    position: relative;
    margin-top: 2px;
    text-align: center;
    font-size: 8px;
    line-height: 14px;
    color: #333;
}

.t-table {
    position: relative;
    width: 203px;
    margin: 1px 0 0 1px;
    font-size: 3.500px;
    line-height: 4.300px;
    color: #444;
}

.t-hd,
.t-tr {
    display: grid;
    grid-template-columns: 69px 1fr;
    overflow: hidden;
}

.t-hd {
    height: 6px;
    line-height: 6px;
    font-weight: 700;
    color: #fff;
    background: #4472c4;
}

.t-hd span,
.t-tr span {
    padding: 0 1.500px;
    word-break: break-all;
}

.t-tr {
    height: 15px;
    padding-top: 1px;
    background: #cfd5ea;
    border-bottom: .5px solid #fff;
}

.t-tr span:first-child {
    border-right: .5px solid #fff;
}

.t-tr:nth-child(odd) {
    background: #e9ebf5;
}

.tall-5 .t-tr,
.tall-6 .t-tr:nth-child(n+4) {
    height: 20px;
}

.tall-5 .t-tr:nth-child(2) {
    height: 15px;
}

.chart-title {
    position: relative;
    text-align: center;
    margin-top: 11px;
    font-size: 4px;
    line-height: 5px;
    color: #555;
}

.chart {
    position: absolute;
    left: 0;
    top: 0;
}

/* Scrollbars */
.thumb-scroll,
.main-track {
    display: flex;
    flex-direction: column;
    gap: 1px;
    width: 19px;
    padding-top: 2px;
    background: #dcdcdc;
}

.thumb-scroll {
    height: 851px;
    padding-bottom: 1px;
}

.sb-btn {
    flex: none;
    height: 18px;
    display: flex;
    align-items: center;
    justify-content: center;
    background: #fff;
    border: 1px solid #d4d4d4;
}

.sb-thumb {
    flex: none;
    background: #fff;
    border: 1px solid #ababab;
}

.sb-thumb-long {
    height: 167px;
}

.sb-thumb-short {
    height: 24px;
}

.sb-fill {
    flex: 1;
}

.tri-up,
.tri-down {
    width: 0;
    height: 0;
    border: 5px solid transparent;
}

.tri-up {
    border-top: 0;
    border-bottom: 5px solid #777;
}

.tri-down {
    border-bottom: 0;
    border-top: 5px solid #777;
}

/* Editing area */
.editor {
    flex: 1;
    min-width: 0;
    display: flex;
    flex-direction: column;
}

.stage {
    height: 805px;
    display: flex;
    border-bottom: 1px solid #c6c6c6;
}

.slide-wrap {
    flex: 1;
    padding: 15px 0 0 113px;
}

.slide {
    --ray: 2px;
    position: relative;
    width: 1374px;
    height: 774px;
    background: #fff;
    border: 1px solid #c6c6c6;
    color: #000;
}

.slide-rays {
    position: absolute;
    left: -1px;
    top: -1px;
    width: 1374px;
    height: 773px;
}

.slide-head {
    position: relative;
    display: flex;
    align-items: center;
    margin: -1px 0 0 -1px;
}

.brand {
    margin: 2px 0 0 12px;
    font: italic 700 40px "Liberation Sans", sans-serif;
}

.slide-title {
    position: relative;
    margin: 161px 0 0;
    padding-left: 7px;
    text-align: center;
    font-family: Lato, "Noto Sans CJK SC", sans-serif;
    font-size: 86px;
    font-weight: 400;
    line-height: 110px;
    white-space: nowrap;
}

.lat {
    font-size: 94px;
}

.slide-date {
    position: relative;
    margin: 34px 0 0;
    padding-left: 1px;
    text-align: center;
    font-size: 55px;
    line-height: 70px;
}

.main-scroll {
    width: 20px;
    height: 804px;
    padding-right: 1px;
}

.main-track {
    height: 737px;
}

.dbl {
    margin-left: 4px;
}

.dbl-up {
    margin-top: 6px;
}

.dbl-down {
    margin-top: 11px;
}

.notes {
    height: 48px;
    padding: 0 0 0 14px;
    font-size: 18px;
    line-height: 40px;
    color: #666;
}

/* Status bar */
.status {
    height: 26px;
    display: flex;
    align-items: center;
    padding-left: 11px;
    background: #f3f3f3;
    border-top: 1px solid #c6c6c6;
    font-size: 15px;
    color: #444;
    white-space: nowrap;
}

.st-text {
    margin-bottom: 4px;
}

.st-spell {
    margin-left: 25px;
}

.st-lang {
    margin-left: 23px;
}

.st-right {
    display: flex;
    align-items: center;
    height: 100%;
    margin-left: auto;
}

.st-btn {
    margin-left: 6px;
}

.st-comment-ic {
    margin-left: 24px;
}

.st-tight {
    margin-left: 2px;
}

.view-on {
    width: 50px;
    height: 100%;
    margin-left: 24px;
    display: flex;
    align-items: center;
    justify-content: center;
    background: #c6c6c6;
}

.v-grid {
    margin-left: 16px;
}

.v-read {
    margin-left: 34px;
}

.v-show {
    margin-left: 33px;
}

.zoom-minus,
.zoom-plus {
    position: relative;
    width: 10px;
    height: 10px;
    background: linear-gradient(#555, #555) center / 10px 1.500px no-repeat;
}

.zoom-minus {
    margin-left: 24px;
}

.zoom-plus {
    margin-left: 6px;
    background:
        linear-gradient(#555, #555) center / 10px 1px no-repeat,
        linear-gradient(#555, #555) center / 1px 10px no-repeat;
}

.zoom-track {
    position: relative;
    width: 125px;
    height: 1px;
    margin-left: 6px;
    background: #b5b5b5;
}

.zoom-knob {
    position: absolute;
    left: 51px;
    top: -6px;
    width: 6px;
    height: 14px;
    background: #777;
}

.zoom-tick {
    position: absolute;
    left: 62px;
    top: -3px;
    width: 1px;
    height: 7px;
    background: #b5b5b5;
}

.zoom-val {
    margin: 0 0 2px 16px;
}

.st-fit {
    margin: 0 9px 0 19px;
}

.taskbar-edge {
    height: 2px;
    display: flex;
}

.edge-a {
    width: 60px;
    background: #222;
}

.edge-b {
    width: 430px;
    background: linear-gradient(90deg, #e4e4e4, #bdbdbd 85%, #e0e0e0);
}

.edge-c {
    flex: 1;
    background: #2b2b2b;
}
```
